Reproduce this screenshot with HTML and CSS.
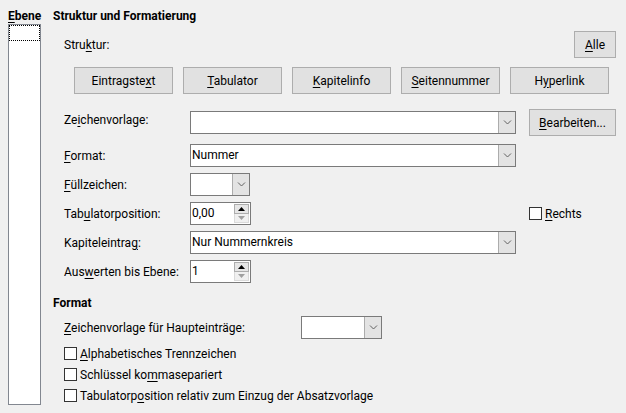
FILE: index.html
```html
<!DOCTYPE html>
<html lang="de">
<head>
<meta charset="utf-8">
<link rel="stylesheet" href="styles.css">
</head>
<body>
<div class="dlg">
  <div class="levels">
    <div class="levels-label"><u>E</u>bene</div>
    <div class="listbox"><div class="focus"></div></div>
  </div>
  <div class="main">
    <div class="heading">Struktur und Formatierung</div>
    <div class="struct-row">
      <span class="label">Stru<u>k</u>tur:</span>
      <button class="btn btn-alle"><u>A</u>lle</button>
    </div>
    <div class="tokens">
      <button class="btn">Eintragste<u>x</u>t</button>
      <button class="btn"><u>T</u>abulator</button>
      <button class="btn"><u>K</u>apitelinfo</button>
      <button class="btn"><u>S</u>eitennummer</button>
      <button class="btn">H<u>y</u>perlink</button>
    </div>
    <div class="form">
      <span class="label first">Ze<u>i</u>chenvorlage:</span>
      <div class="combo wide first-field"><span class="val"></span><span class="dd"><svg width="9" height="5" viewBox="0 0 9 5"><polyline points="1,0.5 4.5,4 8,0.5" fill="none" stroke="#606060" stroke-width="1"/></svg></span></div>
      <button class="btn btn-edit"><u>B</u>earbeiten...</button>

      <span class="label"><u>F</u>ormat:</span>
      <div class="combo wide"><span class="val">Nummer</span><span class="dd"><svg width="9" height="5" viewBox="0 0 9 5"><polyline points="1,0.5 4.5,4 8,0.5" fill="none" stroke="#606060" stroke-width="1"/></svg></span></div>
      <span></span>

      <span class="label"><u>F</u>üllzeichen:</span>
      <div class="combo small"><span class="val"></span><span class="dd"><svg width="9" height="5" viewBox="0 0 9 5"><polyline points="1,0.5 4.5,4 8,0.5" fill="none" stroke="#606060" stroke-width="1"/></svg></span></div>
      <span></span>

      <span class="label">Tab<u>u</u>latorposition:</span>
      <div class="spin"><span class="val">0,00</span><span class="spin-btns"><span class="up"><svg width="7" height="4" viewBox="0 0 7 4"><polygon points="0,4 3.5,0 7,4" fill="#000"/></svg></span><span class="down"><svg width="7" height="4" viewBox="0 0 7 4"><polygon points="0,0 3.5,4 7,0" fill="#a0a0a0"/></svg></span></span></div>
      <label class="check side"><span class="box"></span><span><u>R</u>echts</span></label>

      <span class="label">Kapiteleintra<u>g</u>:</span>
      <div class="combo wide"><span class="val">Nur Nummernkreis</span><span class="dd"><svg width="9" height="5" viewBox="0 0 9 5"><polyline points="1,0.5 4.5,4 8,0.5" fill="none" stroke="#606060" stroke-width="1"/></svg></span></div>
      <span></span>

      <span class="label">Aus<u>w</u>erten bis Ebene:</span>
      <div class="spin"><span class="val">1</span><span class="spin-btns"><span class="up"><svg width="7" height="4" viewBox="0 0 7 4"><polygon points="0,4 3.5,0 7,4" fill="#000"/></svg></span><span class="down"><svg width="7" height="4" viewBox="0 0 7 4"><polygon points="0,0 3.5,4 7,0" fill="#a0a0a0"/></svg></span></span></div>
      <span></span>
    </div>

    <div class="heading heading-format">Format</div>
    <div class="main-entry">
      <span class="label"><u>Z</u>eichenvorlage für Haupteinträge:</span>
      <div class="combo entry"><span class="val"></span><span class="dd"><svg width="9" height="5" viewBox="0 0 9 5"><polyline points="1,0.5 4.5,4 8,0.5" fill="none" stroke="#606060" stroke-width="1"/></svg></span></div>
    </div>
    <div class="checks">
      <label class="check"><span class="box"></span><span><u>A</u>lphabetisches Trennzeichen</span></label>
      <label class="check"><span class="box"></span><span>Schlüssel ko<u>m</u>masepariert</span></label>
      <label class="check"><span class="box"></span><span>Tabulatorp<u>o</u>sition relativ zum Einzug der Absatzvorlage</span></label>
    </div>
  </div>
</div>
</body>
</html>
```
FILE: styles.css
```css
* { box-sizing: border-box; }
html, body { margin: 0; padding: 0; }
body {
  width: 626px;
  height: 413px;
  background: #f0f0f0;
  font-family: Roboto, "Noto Sans", sans-serif;
  font-size: 12px;
  color: #000;
  overflow: hidden;
}
u { text-decoration: underline; text-underline-offset: 2px; }
.dlg {
  display: flex;
  padding: 8px 10px 8px 8px;
  height: 413px;
}
.levels {
  width: 33px;
  display: flex;
  flex-direction: column;
}
.levels-label {
  font-weight: 700;
  line-height: 16px;
  height: 16px;
}
.listbox {
  flex: 1;
  background: #fff;
  border: 1px solid #828790;
  padding: 0;
}
.focus {
  height: 16px;
  border: 1px dotted #000;
  margin: 0;
}
.main {
  flex: 1;
  margin-left: 12px;
  display: flex;
  flex-direction: column;
}
.heading {
  font-weight: 700;
  line-height: 17px;
  height: 17px;
}
.label { white-space: nowrap; }
.struct-row {
  display: flex;
  align-items: center;
  justify-content: space-between;
  padding-left: 11px;
  margin-top: 6px;
  height: 27px;
}
.btn {
  font: inherit;
  color: #000;
  background: #e1e1e1;
  border: 1px solid #adadad;
  padding: 0;
  height: 27px;
  margin: 0;
}
.btn-alle { width: 42px; }
.tokens {
  display: grid;
  grid-template-columns: repeat(5, 99px);
  column-gap: 10px;
  margin-top: 9px;
  padding-left: 21px;
}
.form {
  display: grid;
  grid-template-columns: 126px 326px 100px;
  grid-template-rows: 29px repeat(5, 23px);
  row-gap: 6px;
  align-items: center;
  margin-top: 15px;
  padding-left: 11px;
}
.form .first { align-self: start; margin-top: 4px; }
.form .first-field { align-self: start; margin-top: 2px; }
.btn-edit { align-self: start; width: 87px; margin-left: 13px; }
.side { margin-left: 13px; }
.combo, .spin {
  display: flex;
  height: 23px;
  background: #fff;
  border: 1px solid #7a7a7a;
}
.combo .val, .spin .val {
  flex: 1;
  line-height: 21px;
  padding-left: 1px;
  white-space: nowrap;
  overflow: hidden;
}
.combo .dd {
  width: 17px;
  background: #e3e3e3;
  border-left: 1px solid #acacac;
  display: flex;
  align-items: center;
  justify-content: center;
}
.combo.wide { width: 326px; }
.combo.small { width: 60px; }
.combo.entry { width: 81px; }
.spin { width: 61px; }
.spin-btns {
  width: 16px;
  display: flex;
  flex-direction: column;
  padding: 1px 1px 1px 0;
}
.spin-btns .up, .spin-btns .down {
  flex: 1;
  display: flex;
  align-items: center;
  justify-content: center;
}
.spin-btns .up { background: #e6e6e6; border: 1px solid #adadad; }
.spin-btns .down { background: #f0f0f0; border: 1px solid #dadada; border-top: none; }
.check {
  display: flex;
  align-items: center;
  white-space: nowrap;
}
.box {
  width: 13px;
  height: 13px;
  border: 1px solid #333;
  background: #fff;
  margin-right: 3px;
  flex: none;
}
.heading-format { margin-top: 12px; }
.main-entry {
  display: flex;
  align-items: center;
  padding-left: 11px;
  margin-top: 4px;
  height: 23px;
}
.main-entry .label { width: 237px; }
.checks {
  display: flex;
  flex-direction: column;
  padding-left: 11px;
  margin-top: 4px;
}
.checks .check { height: 21px; }
```
